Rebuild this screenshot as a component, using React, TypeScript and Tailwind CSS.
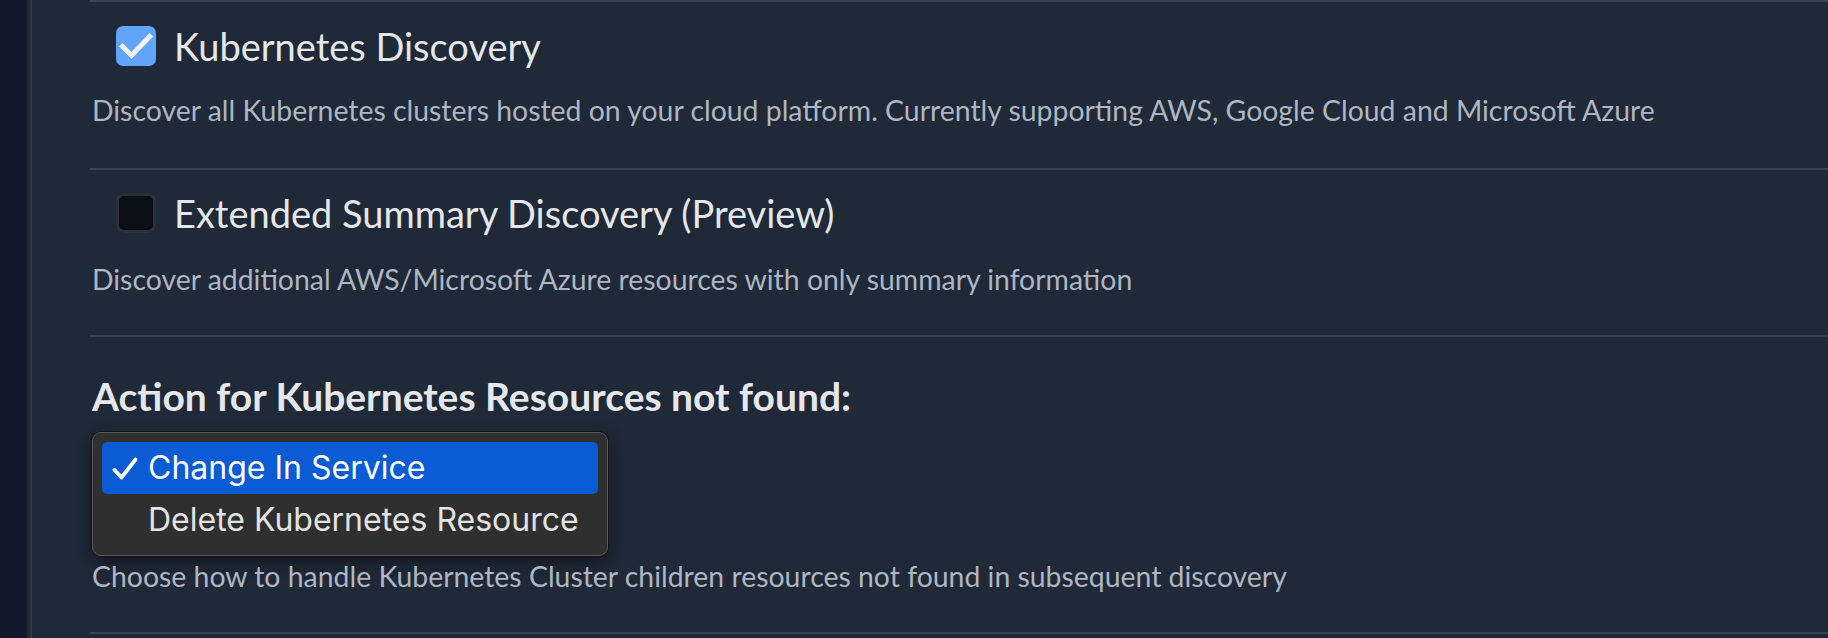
import React, { useState } from "react";

type Option = { value: string; label: string };

const options: Option[] = [
  { value: "change", label: "Change In Service" },
  { value: "delete", label: "Delete Kubernetes Resource" },
];

function Checkbox({ checked, onChange }: { checked: boolean; onChange: () => void }) {
  if (checked) {
    return (
      <button
        onClick={onChange}
        className="flex h-[40px] w-[40px] shrink-0 items-center justify-center rounded-[7px] bg-[#60a5fa]"
      >
        <svg width="40" height="40" viewBox="0 0 40 40" fill="none">
          <path d="M6.5 20.5l9 9L33.5 10.5" stroke="#eef2f7" strokeWidth="5" strokeLinecap="square" />
        </svg>
      </button>
    );
  }
  return (
    <button
      onClick={onChange}
      className="h-[40px] w-[40px] shrink-0 rounded-[8px] border-[3px] border-[#2b3039] bg-[#0b0f17]"
    />
  );
}

function Divider() {
  return <div className="h-[2px] w-full bg-[#3a4252]" />;
}

function DiscoveryOption({
  title,
  description,
  checked,
  onToggle,
  top,
  gap,
  bottom,
}: {
  title: string;
  description: string;
  checked: boolean;
  onToggle: () => void;
  top: string;
  gap: string;
  bottom: string;
}) {
  return (
    <div className={`${top} ${bottom}`}>
      <div className="ml-[26px] flex items-center gap-[18px]">
        <Checkbox checked={checked} onChange={onToggle} />
        <span className="text-[38px] leading-[40px] text-[#e5e7eb]">{title}</span>
      </div>
      <p className={`${gap} ml-[2px] text-[28.4px] leading-[32px] text-[#aeb6c2]`}>{description}</p>
    </div>
  );
}

function PopupMenu({ value, onPick }: { value: string; onPick: (v: string) => void }) {
  return (
    <div className="w-[516px] rounded-[9px] border border-[#5a5a5a] bg-[#2f2f2f] p-[9px] font-['Inter',sans-serif] shadow-[0_0_0_1px_#151515,0_6px_18px_rgba(0,0,0,0.45)]">
      {options.map((o) => {
        const active = o.value === value;
        return (
          <div
            key={o.value}
            onClick={() => onPick(o.value)}
            className={
              active
                ? "flex h-[52px] items-center rounded-[5px] bg-[#0a5bd4] pl-[10px] text-white"
                : "flex h-[52px] items-center rounded-[5px] pl-[10px] text-[#e3e3e3]"
            }
          >
            <span className="flex w-[36px] shrink-0">
              {active && (
                <svg width="26" height="23" viewBox="0 0 26 23" fill="none">
                  <path d="M2.5 13l7 7.5L23.5 2.5" stroke="white" strokeWidth="3.8" strokeLinecap="round" strokeLinejoin="round" />
                </svg>
              )}
            </span>
            <span className="text-[32px] leading-[36px]">{o.label}</span>
          </div>
        );
      })}
    </div>
  );
}

export default function App() {
  const [k8s, setK8s] = useState(true);
  const [extended, setExtended] = useState(false);
  const [action, setAction] = useState("change");

  return (
    <div className="flex h-[638px] w-full overflow-hidden bg-[#1f2937] font-['Lato',sans-serif]">
      <div className="w-[26px] shrink-0 bg-[#111827]" />
      <div className="w-[6px] shrink-0 bg-gradient-to-r from-[#151c2a] to-[#363c49]" />
      <main className="flex-1 pl-[58px]">
        <Divider />
        <DiscoveryOption
          title="Kubernetes Discovery"
          description="Discover all Kubernetes clusters hosted on your cloud platform. Currently supporting AWS, Google Cloud and Microsoft Azure"
          checked={k8s}
          onToggle={() => setK8s(!k8s)}
          top="pt-[24px]"
          gap="mt-[28px]"
          bottom="pb-[42px]"
        />
        <Divider />
        <DiscoveryOption
          title="Extended Summary Discovery (Preview)"
          description="Discover additional AWS/Microsoft Azure resources with only summary information"
          checked={extended}
          onToggle={() => setExtended(!extended)}
          top="pt-[23px]"
          gap="mt-[30px]"
          bottom="pb-[40px]"
        />
        <Divider />
        <div className="pt-[37px] pb-[40px]">
          <h3 className="ml-[2px] text-[39px] leading-[44px] font-bold text-[#e5e7eb]">
            Action for Kubernetes Resources not found:
          </h3>
          <div className="mt-[14px] ml-[2px]">
            <PopupMenu value={action} onPick={setAction} />
          </div>
          <p className="mt-[4px] ml-[2px] text-[28.4px] leading-[32px] text-[#aeb6c2]">
            Choose how to handle Kubernetes Cluster children resources not found in subsequent discovery
          </p>
        </div>
        <Divider />
      </main>
    </div>
  );
}
